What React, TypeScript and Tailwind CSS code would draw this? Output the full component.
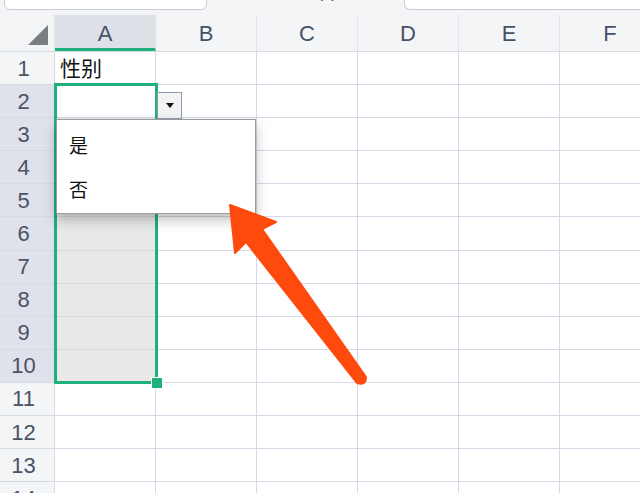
import React from "react";

const columns = ["A", "B", "C", "D", "E", "F"];
const rows = Array.from({ length: 14 }, (_, i) => i + 1);

const font = { fontFamily: '"Liberation Sans", "Noto Sans CJK SC", sans-serif' };
const cjk = { fontFamily: '"Noto Sans CJK SC", sans-serif' };

const App: React.FC = () => {
  return (
    <div className="relative w-[640px] h-[493px] overflow-hidden bg-white" style={font}>
      {/* tab strip */}
      <div className="h-[15px] bg-[#f3f4f6] flex relative">
        <div className="ml-[4px] w-[203px] h-[12px] -mt-[2px] bg-white border border-[#c9ccd3] rounded-b-[6px]" />
        <div className="absolute left-[318px] -top-[16px] text-[15px] leading-[18px] text-[#333]">(1)</div>
        <div className="ml-auto w-[236px] h-[12px] -mt-[2px] bg-white border border-r-0 border-[#c9ccd3] rounded-bl-[6px]" />
      </div>

      {/* column header */}
      <div className="flex h-[37px] bg-[#f4f5f7] border-b border-[#d8dae3]">
        <div className="w-[55px] shrink-0 relative border-r border-[#e2e4ea]">
          <svg className="absolute left-[28px] top-[10px]" width="20" height="20" viewBox="0 0 20 20">
            <polygon points="20,0 20,20 0,20" fill="#7a7d82" />
          </svg>
        </div>
        {columns.map((c) => (
          <div
            key={c}
            className={
              c === "A"
                ? "w-[101px] shrink-0 flex items-center justify-center text-[22px] text-[#46516a] bg-[#dde0e7] border-b-[3px] border-[#1fb07c] pt-[3px] border-r border-r-[#e2e4ea]"
                : "w-[101px] shrink-0 flex items-center justify-center text-[22px] text-[#46516a] border-r border-[#e2e4ea]"
            }
          >
            {c}
          </div>
        ))}
      </div>

      {/* rows */}
      {rows.map((r) => {
        const selected = r >= 2 && r <= 10;
        return (
          <div key={r} className="flex h-[33.1px] border-b border-[#d7d8e6]">
            <div
              className={
                selected
                  ? "w-[55px] shrink-0 flex items-center justify-center pr-[7px] text-[22px] text-[#4a5366] bg-[#dfe2ea] border-r border-[#d8dae3]"
                  : "w-[55px] shrink-0 flex items-center justify-center pr-[7px] text-[22px] text-[#4a5366] bg-[#f4f5f7] border-r border-[#d8dae3]"
              }
            >
              {r}
            </div>
            {columns.map((c) => (
              <div
                key={c}
                className={
                  c === "A" && r >= 3 && r <= 10
                    ? "w-[101px] shrink-0 bg-[#e9e9e9] border-r border-[#d7d8e6]"
                    : "w-[101px] shrink-0 border-r border-[#d7d8e6] flex items-center"
                }
              >
                {c === "A" && r === 1 && (
                  <span className="ml-[5px] text-[21px] text-[#111]" style={cjk}>
                    性别
                  </span>
                )}
              </div>
            ))}
          </div>
        );
      })}

      {/* selection border */}
      <div className="absolute left-[54px] top-[83px] w-[104px] h-[301px] border-[3px] border-[#1fb07c]" />
      <div className="absolute left-[151px] top-[377px] w-[10px] h-[10px] bg-[#1fb07c] border border-white box-content" />

      {/* dropdown button */}
      <div className="absolute left-[157px] top-[92px] w-[25px] h-[27px] bg-[#f2f3f5] border border-[#8d9db2] flex items-center justify-center">
        <svg width="8" height="5" viewBox="0 0 8 5">
          <polygon points="0,0 8,0 4,5" fill="#111" />
        </svg>
      </div>

      {/* dropdown list */}
      <div
        className="absolute left-[56px] top-[119px] w-[200px] h-[95px] bg-white border border-[#9a9ca0] shadow-[0_6px_12px_rgba(0,0,0,0.25)] flex flex-col pl-[12px] pt-[13px] gap-[21px]"
        style={cjk}
      >
        <span className="text-[19px] leading-[23px] text-[#111]">是</span>
        <span className="text-[19px] leading-[23px] text-[#111]">否</span>
      </div>

      {/* arrow */}
      <svg className="absolute left-0 top-0" width="640" height="493" viewBox="0 0 640 493">
        <path
          d="M230 205 L276 222 L262 229 L366 377 Q366 386 357 383 L246 242 L235 253 Z"
          fill="#fe4a0c"
          stroke="#fe4a0c"
          strokeWidth="2"
          strokeLinejoin="round"
        />
      </svg>
    </div>
  );
};

export default App;
